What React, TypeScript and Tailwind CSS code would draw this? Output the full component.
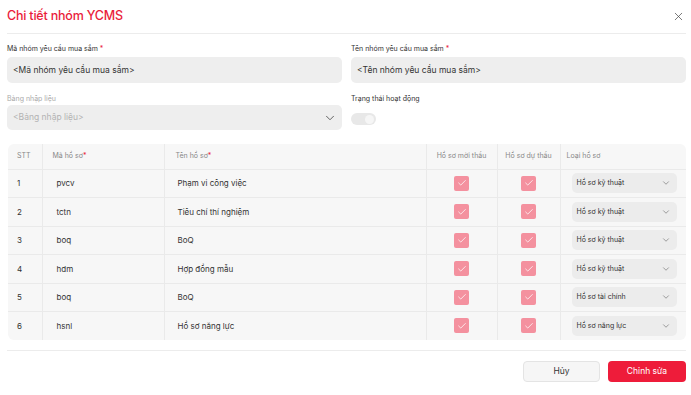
import { Check, ChevronDown, X } from "lucide-react";

type Row = {
  stt: number;
  code: string;
  name: string;
  type: string;
};

const rows: Row[] = [
  { stt: 1, code: "pvcv", name: "Phạm vi công việc", type: "Hồ sơ kỹ thuật" },
  { stt: 2, code: "tctn", name: "Tiêu chí thí nghiệm", type: "Hồ sơ kỹ thuật" },
  { stt: 3, code: "boq", name: "BoQ", type: "Hồ sơ kỹ thuật" },
  { stt: 4, code: "hdm", name: "Hợp đồng mẫu", type: "Hồ sơ kỹ thuật" },
  { stt: 5, code: "boq", name: "BoQ", type: "Hồ sơ tài chính" },
  { stt: 6, code: "hsnl", name: "Hồ sơ năng lực", type: "Hồ sơ năng lực" },
];

const PinkCheck = () => (
  <span className="inline-flex w-[15px] h-[15px] items-center justify-center rounded-[2px] bg-[#f4919f]">
    <Check size={10} strokeWidth={1.8} className="text-white" />
  </span>
);

export default function App() {
  return (
    <div
      className="w-[691px] h-[395px] bg-white pl-[7px] pr-[5px] text-[#222]"
      style={{ fontFamily: "Inter, 'Noto Sans', sans-serif" }}
    >
      {/* header */}
      <div className="h-[34px] flex items-center justify-between border-b border-[#ececec]">
        <h1 className="text-[12.5px] font-medium text-[#ea1d3b] tracking-[-0.2px]">Chi tiết nhóm YCMS</h1>
        <X size={13} strokeWidth={1.3} className="text-[#444] mr-[1px]" />
      </div>

      {/* form */}
      <div className="grid grid-cols-2 gap-x-[9px] pt-[10px]">
        <div>
          <div className="h-[10px] leading-[10px] text-[7px] text-[#333] mb-[3px]">
            Mã nhóm yêu cầu mua sắm <span className="text-[#ea1d3b]">*</span>
          </div>
          <div className="h-[26px] rounded-[5px] bg-[#eeeeee] flex items-center px-[6px] text-[8.5px] text-[#333]">
            &lt;Mã nhóm yêu cầu mua sắm&gt;
          </div>
        </div>
        <div>
          <div className="h-[10px] leading-[10px] text-[7px] text-[#333] mb-[3px]">
            Tên nhóm yêu cầu mua sắm <span className="text-[#ea1d3b]">*</span>
          </div>
          <div className="h-[26px] rounded-[5px] bg-[#eeeeee] flex items-center px-[6px] text-[8.5px] text-[#333]">
            &lt;Tên nhóm yêu cầu mua sắm&gt;
          </div>
        </div>

        <div className="pt-[11px]">
          <div className="h-[10px] leading-[10px] text-[7px] text-[#aaaaaa] mb-[1px]">Bảng nhập liệu</div>
          <div className="h-[25px] rounded-[5px] bg-[#eeeeee] flex items-center justify-between pl-[6px] pr-[5px] text-[8.5px] text-[#b3b3b3]">
            <span>&lt;Bảng nhập liệu&gt;</span>
            <ChevronDown size={14} strokeWidth={1.4} className="text-[#444]" />
          </div>
        </div>
        <div className="pt-[11px]">
          <div className="h-[10px] leading-[10px] text-[7px] text-[#333] mb-[9px]">Trạng thái hoạt động</div>
          <div className="w-[25px] h-[12px] rounded-full bg-[#e8e8e8] flex items-center justify-end px-[2px]">
            <span className="w-[9px] h-[9px] rounded-full bg-[#f6f6f6]" />
          </div>
        </div>
      </div>

      {/* table */}
      <div className="mt-[14px] ml-[1px] rounded-[6px] overflow-hidden bg-[#f7f7f7]">
        <table className="w-[679px] table-fixed border-collapse text-left">
          <colgroup>
            <col className="w-[34px]" />
            <col className="w-[122px]" />
            <col className="w-[262px]" />
            <col className="w-[71px]" />
            <col className="w-[63px]" />
            <col className="w-[127px]" />
          </colgroup>
          <thead>
            <tr className="h-[25px] text-[7px] text-[#888] border-b border-[#eaeaea]">
              <th className="font-normal pl-[9px]">STT</th>
              <th className="font-normal pl-[10px] border-l border-[#eaeaea]">
                Mã hồ sơ<span className="text-[#ea1d3b]">*</span>
              </th>
              <th className="font-normal pl-[11px] border-l border-[#eaeaea]">
                Tên hồ sơ<span className="text-[#ea1d3b]">*</span>
              </th>
              <th className="font-normal text-center border-l border-[#eaeaea]">Hồ sơ mời thầu</th>
              <th className="font-normal text-center border-l border-[#eaeaea]">Hồ sơ dự thầu</th>
              <th className="font-normal pl-[6px] border-l border-[#eaeaea]">Loại hồ sơ</th>
            </tr>
          </thead>
          <tbody>
            {rows.map((r, i) => (
              <tr
                key={i}
                className={`h-[28.5px] text-[8px] text-[#333] ${i < rows.length - 1 ? "border-b border-[#eaeaea]" : ""}`}
              >
                <td className="pl-[9px]">{r.stt}</td>
                <td className="pl-[14px] border-l border-[#eaeaea]">{r.code}</td>
                <td className="pl-[13px] border-l border-[#eaeaea]">{r.name}</td>
                <td className="text-center border-l border-[#eaeaea]">
                  <PinkCheck />
                </td>
                <td className="text-center border-l border-[#eaeaea]">
                  <PinkCheck />
                </td>
                <td className="pl-[11px] pr-[10px] border-l border-[#eaeaea]">
                  <div className="h-[20px] rounded-[5px] bg-[#ececec] flex items-center justify-between pl-[5px] pr-[6px] text-[7px] text-[#333]">
                    <span>{r.type}</span>
                    <ChevronDown size={10} strokeWidth={1.3} className="text-[#555]" />
                  </div>
                </td>
              </tr>
            ))}
          </tbody>
        </table>
      </div>

      {/* footer */}
      <div className="mt-[10px] border-t border-[#ececec] flex justify-end gap-[8px] pt-[10px]">
        <button className="w-[77px] h-[21px] rounded-[4px] bg-[#f6f6f6] border border-[#e4e4e4] text-[8.5px] text-[#333]">
          Hủy
        </button>
        <button className="w-[78px] h-[21px] rounded-[4px] bg-[#ee1c3a] text-[8.5px] text-white">
          Chỉnh sửa
        </button>
      </div>
    </div>
  );
}
